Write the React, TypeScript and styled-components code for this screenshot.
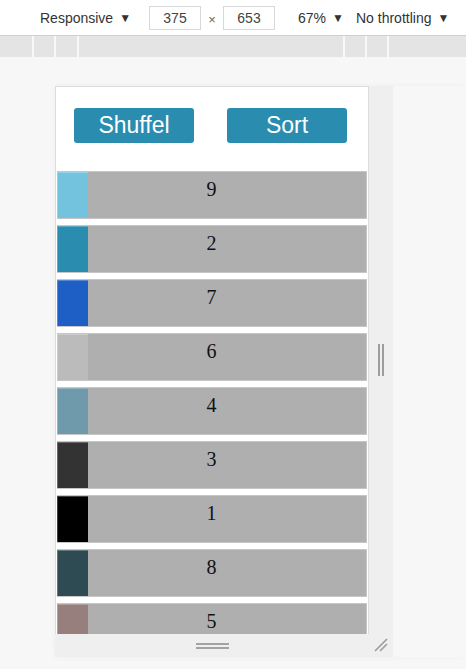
import styled, { createGlobalStyle } from "styled-components";

const GlobalStyle = createGlobalStyle`
  html, body {
    margin: 0;
    padding: 0;
    background: #f7f7f7;
    font-family: "Liberation Sans", Arial, sans-serif;
  }
`;

const bars = [
  { value: 9, color: "#73c3de" },
  { value: 2, color: "#2a8db0" },
  { value: 7, color: "#1e5fc6" },
  { value: 6, color: "#bbbbbb" },
  { value: 4, color: "#6f9aac" },
  { value: 3, color: "#333333" },
  { value: 1, color: "#000000" },
  { value: 8, color: "#2e4a53" },
  { value: 5, color: "#967f7d" },
];

const rulerSegments = [34, 22, 23, 266, 22, 22, 77];

export default function App() {
  return (
    <>
      <GlobalStyle />
      <Page>
        <Toolbar>
          <DropDown $width={109}>
            Responsive<Arrow>▼</Arrow>
          </DropDown>
          <SizeInput>375</SizeInput>
          <Times>×</Times>
          <SizeInput>653</SizeInput>
          <DropDown $width={58} $left={23}>
            67%<Arrow>▼</Arrow>
          </DropDown>
          <DropDown $left={0}>
            No throttling<Arrow>▼</Arrow>
          </DropDown>
        </Toolbar>
        <Ruler>
          {rulerSegments.map((w, i) => (
            <RulerSegment key={i} $width={w} $last={i === rulerSegments.length - 1} />
          ))}
        </Ruler>
        <Stage>
          <Frame>
            <Device>
              <ButtonBar>
                <ActionButton>Shuffel</ActionButton>
                <ActionButton>Sort</ActionButton>
              </ButtonBar>
              <BarList>
                {bars.map((b) => (
                  <BarRow key={b.value}>
                    <Swatch $color={b.color} />
                    <BarValue>{b.value}</BarValue>
                  </BarRow>
                ))}
              </BarList>
            </Device>
            <SideGutter>
              <VerticalHandle />
            </SideGutter>
            <BottomGutter>
              <HorizontalHandle />
            </BottomGutter>
            <CornerGutter>
              <svg width="16" height="16" viewBox="0 0 16 16">
                <line x1="2" y1="14" x2="14" y2="2" stroke="#9a9a9a" strokeWidth="1.6" />
                <line x1="7" y1="14" x2="14" y2="7" stroke="#9a9a9a" strokeWidth="1.6" />
              </svg>
            </CornerGutter>
          </Frame>
        </Stage>
      </Page>
    </>
  );
}

const Page = styled.div`
  width: 466px;
  height: 669px;
  overflow: hidden;
  display: flex;
  flex-direction: column;
`;

const Toolbar = styled.div`
  height: 36px;
  box-sizing: border-box;
  background: #ffffff;
  border-bottom: 1px solid #cfcfcf;
  display: flex;
  align-items: center;
  padding-left: 40px;
  font-size: 14px;
  color: #333333;
`;

const DropDown = styled.span<{ $width?: number; $left?: number }>`
  display: flex;
  align-items: center;
  flex-shrink: 0;
  width: ${(p) => (p.$width ? `${p.$width}px` : "auto")};
  margin-left: ${(p) => p.$left ?? 0}px;
  white-space: nowrap;
`;

const Arrow = styled.span`
  font-size: 12px;
  margin-left: 6px;
  color: #333333;
`;

const SizeInput = styled.div`
  width: 50px;
  height: 22px;
  flex-shrink: 0;
  border: 1px solid #d8d8d8;
  display: flex;
  align-items: center;
  justify-content: center;
  font-size: 14px;
  color: #444444;
`;

const Times = styled.span`
  width: 22px;
  text-align: center;
  font-size: 13px;
  color: #666666;
  padding-top: 3px;
`;

const Ruler = styled.div`
  height: 21px;
  background: #e4e4e4;
  display: flex;
`;

const RulerSegment = styled.div<{ $width: number; $last: boolean }>`
  width: ${(p) => p.$width}px;
  flex-shrink: 0;
  box-sizing: border-box;
  border-right: ${(p) => (p.$last ? "none" : "2px solid #f8f8f8")};
`;

const Stage = styled.div`
  flex: 1;
  background: #f7f7f7;
  padding: 29px 0 0 55px;
`;

const Frame = styled.div`
  display: grid;
  grid-template-columns: 314px 24px;
  grid-template-rows: 548px 23px;
  box-shadow: 0 0 6px rgba(0, 0, 0, 0.04);
`;

const Device = styled.div`
  box-sizing: border-box;
  background: #ffffff;
  border: 1px solid #dcdcdc;
  border-bottom: none;
  overflow: hidden;
  padding: 0 1px;
`;

const ButtonBar = styled.div`
  display: flex;
  padding: 21px 0 0 17px;
  gap: 33px;
  height: 63px;
`;

const ActionButton = styled.button`
  width: 120px;
  height: 35px;
  border: none;
  border-radius: 3px;
  background: #2a8db0;
  color: #ffffff;
  font-family: "Liberation Sans", Arial, sans-serif;
  font-size: 23px;
  padding: 0;
`;

const BarList = styled.div`
  display: flex;
  flex-direction: column;
  gap: 6px;
`;

const BarRow = styled.div`
  box-sizing: border-box;
  height: 48px;
  display: grid;
  grid-template-columns: 31px 1fr 31px;
  background: #afafaf;
  border: 1px solid #c6c6c6;
  border-left: none;
`;

const Swatch = styled.div<{ $color: string }>`
  background: ${(p) => p.$color};
  box-shadow: inset 1px 1px 0 rgba(255, 255, 255, 0.25);
`;

const BarValue = styled.div`
  text-align: center;
  font-family: "Liberation Serif", "Times New Roman", serif;
  font-size: 20px;
  color: #111111;
  padding-top: 6px;
`;

const SideGutter = styled.div`
  background: #efefef;
  display: flex;
  align-items: center;
  padding-left: 9px;
`;

const VerticalHandle = styled.div`
  width: 2px;
  height: 32px;
  border-left: 2px solid #9d9d9d;
  border-right: 2px solid #9d9d9d;
`;

const BottomGutter = styled.div`
  background: #efefef;
  display: flex;
  justify-content: center;
  padding-top: 9px;
  box-sizing: border-box;
`;

const HorizontalHandle = styled.div`
  width: 33px;
  height: 2px;
  border-top: 2px solid #a3a3a3;
  border-bottom: 2px solid #a3a3a3;
`;

const CornerGutter = styled.div`
  background: #efefef;
  display: flex;
  align-items: flex-start;
  padding: 3px 0 0 4px;
`;
